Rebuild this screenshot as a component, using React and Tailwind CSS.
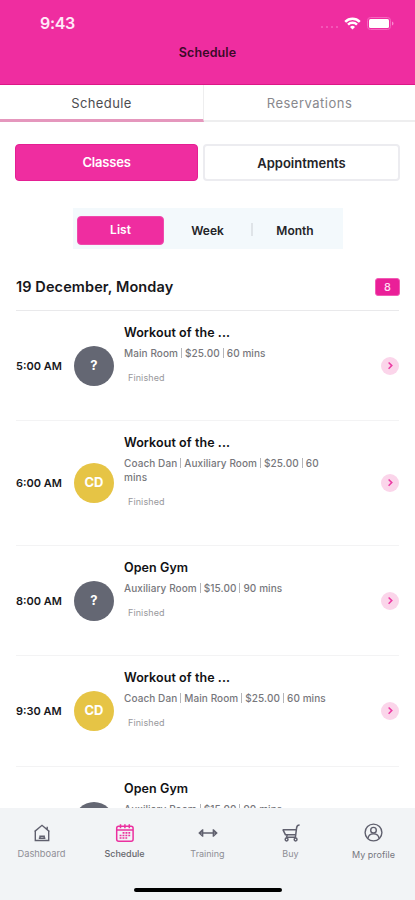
import React from "react";

const classes = [
  { time: "5:00 AM", who: "?", title: "Workout of the ...", info: ["Main Room", "$25.00", "60 mins"], status: "Finished", height: "h-[110px]" },
  { time: "6:00 AM", who: "CD", title: "Workout of the ...", info: ["Coach Dan", "Auxiliary Room", "$25.00", "60 mins"], status: "Finished", height: "h-[125px]" },
  { time: "8:00 AM", who: "?", title: "Open Gym", info: ["Auxiliary Room", "$15.00", "90 mins"], status: "Finished", height: "h-[110px]" },
  { time: "9:30 AM", who: "CD", title: "Workout of the ...", info: ["Coach Dan", "Main Room", "$25.00", "60 mins"], status: "Finished", height: "h-[111px]" },
  { title: "Open Gym", info: ["Auxiliary Room", "$15.00", "90 mins"], height: "h-[110px]" },
];

function StatusBar() {
  return (
    <div className="flex h-[42px] items-end justify-between pr-[21px] pl-[40px]">
      <span className="mb-[8px] text-[16px] leading-[21px] font-semibold tracking-[-0.3px] text-[#ffe9f8]">9:43</span>
      <div className="mb-[12px] flex h-[14px] items-center">
        <div className="mt-[8px] mr-[6px] flex gap-[3px]">
          {[0, 1, 2, 3].map((i) => (
            <i key={i} className="size-[2px] rounded-full bg-[#f565bf]" />
          ))}
        </div>
        <svg width="17" height="13" viewBox="0 0 17 13" fill="none" stroke="#fff" strokeWidth="2.5">
          <path d="M1.2 4.8a10.4 10.4 0 0 1 14.6 0" />
          <path d="M4 7.7a6.4 6.4 0 0 1 9 0" />
          <path d="M8.5 12.6 6 9.9a3.6 3.6 0 0 1 5 0z" fill="#fff" stroke="none" />
        </svg>
        <svg className="ml-[6px]" width="27" height="13" viewBox="0 0 27 13">
          <rect x="0.5" y="0.5" width="23" height="12" rx="3" fill="none" stroke="#f565bf" />
          <rect x="2" y="2" width="20" height="9" rx="1.5" fill="#fff" />
          <path d="M25 4.5c2 .8 2 3.2 0 4z" fill="#f88bd0" />
        </svg>
      </div>
    </div>
  );
}

function ClassRow({ item }) {
  return (
    <div className={`flex shrink-0 items-center border-b border-[#f3f3f4] ${item.height}`}>
      <div className="w-[58px] shrink-0 text-[11px] leading-[16px] font-semibold whitespace-nowrap text-[#17171b]">{item.time}</div>
      <div
        className={`flex size-[40px] shrink-0 items-center justify-center rounded-full text-[13px] font-bold text-white ${
          item.who === "CD" ? "bg-[#e6c445]" : "bg-[#646773]"
        }`}
      >
        {item.who}
      </div>
      <div className="ml-[10px] w-[206px] self-start pt-[13px]">
        <div className="text-[12.5px] leading-[18px] font-semibold tracking-[0.07px] text-[#111114]">{item.title}</div>
        <div className="mt-[4px] text-[10px] leading-[14px] font-medium tracking-[0.08px] text-[#77777c]">
          {item.info.map((part, i) => (
            <React.Fragment key={part}>
              {i > 0 && <span className="mx-[3px] inline-block h-[10px] w-px bg-[#b5b5b9] align-[-1px]" />}
              {part}
            </React.Fragment>
          ))}
        </div>
        {item.status && <div className="mt-[11px] ml-[4px] text-[9px] leading-[14px] tracking-[0.1px] text-[#98989c]">{item.status}</div>}
      </div>
      <div className="ml-auto flex size-[18px] items-center justify-center rounded-full bg-[#fbd5ea]">
        <svg width="18" height="18" viewBox="0 0 18 18" fill="none" stroke="#eb3aa2" strokeWidth="1.5">
          <path d="m7.6 5.5 3.2 3.1-3.2 3.1" />
        </svg>
      </div>
    </div>
  );
}

function HomeIcon() {
  return (
    <svg width="18" height="18" viewBox="0 0 18 18" fill="none" stroke="#60606e" strokeWidth="1.4">
      <path d="M1.5 7.6 9 1.3l7.5 6.3M2.3 7.2v9.3h13.4V7.2M14.2 5.2V2.8" />
      <path d="M7 13.4v-1.2h4.2v1.2M5.8 14.3h6.6" />
    </svg>
  );
}

function CalendarIcon() {
  return (
    <svg width="20" height="18" viewBox="0 0 20 18" fill="none" stroke="#eb309f" strokeWidth="1.5">
      <rect x="1.7" y="2.2" width="16.4" height="15" rx="2" />
      <path d="M2 6h16M5.5 0.3v4M9.9 0.3v4M14.3 0.3v4" />
      <path d="M7.6 8.9h7.6M4.6 11.5h10.6M4.6 14h7.6" strokeWidth="1.7" strokeDasharray="1.9 1" />
    </svg>
  );
}

function TrainingIcon() {
  return (
    <svg width="20" height="18" viewBox="0 0 20 18" fill="none" stroke="#60606e" strokeWidth="1.3">
      <path d="M1 9h18M4.7 5.3v7.4M15.3 5.3v7.4M4.7 5.8 1.2 9l3.5 3.2M15.3 5.8 18.8 9l-3.5 3.2" />
    </svg>
  );
}

function CartIcon() {
  return (
    <svg width="18" height="18" viewBox="0 0 18 18" fill="none" stroke="#60606e" strokeWidth="1.5">
      <path d="M17.6 1c-2.2 0-2.8 1.2-3 2.8l-1.2 9.5H4.3M.6 5.7h13.4M.9 5.7l2.5 5h10" />
      <path d="m5.2 11-.8 2.6" />
      <circle cx="4.6" cy="15.5" r="1.4" />
      <circle cx="13.6" cy="15.5" r="1.4" />
    </svg>
  );
}

function ProfileIcon() {
  return (
    <svg width="19" height="19" viewBox="0 0 19 19" fill="none" stroke="#60606e" strokeWidth="1.4">
      <circle cx="9.5" cy="9.5" r="8.4" />
      <circle cx="9.5" cy="7.2" r="2.8" />
      <path d="M4 15.5c.3-3.2 2-4.6 5.5-4.6s5.2 1.4 5.5 4.6" />
    </svg>
  );
}

const nav = [
  { label: "Dashboard", Icon: HomeIcon, text: "text-[9.3px] text-[#8e8e95]" },
  { label: "Schedule", Icon: CalendarIcon, text: "text-[9px] font-medium text-[#66666d]" },
  { label: "Training", Icon: TrainingIcon, text: "text-[9px] text-[#8e8e95]" },
  { label: "Buy", Icon: CartIcon, text: "text-[9px] text-[#8e8e95]" },
  { label: "My profile", Icon: ProfileIcon, text: "text-[9px] text-[#77777e] pt-[1px]" },
];

export default function App() {
  return (
    <div className="flex h-[900px] w-[415px] flex-col overflow-hidden bg-white font-['Inter','Liberation_Sans',sans-serif]">
      <header className="h-[85px] shrink-0 border-b border-[#dc1787] bg-[#ef2da0]">
        <StatusBar />
        <h1 className="text-center text-[12.5px] leading-[21px] font-semibold tracking-[0.1px] text-[#3b0a29]">Schedule</h1>
      </header>

      <div className="flex h-[37px] shrink-0 text-center text-[13px] leading-[36px]">
        <div className="w-[204px] border-r border-b-[3px] border-r-[#eeeeef] border-b-[#e597bd] tracking-[0.4px] text-[#4c4c50]">Schedule</div>
        <div className="flex-1 border-b-2 border-[#eeeeef] tracking-[0.5px] text-[#88888d]">Reservations</div>
      </div>

      <div className="mt-[22px] flex h-[37px] shrink-0 gap-[5px] px-[15px] text-center text-[13px] font-semibold">
        <div className="w-[183px] rounded-[4px] border border-[#e41f93] bg-[#ef2da0] leading-[34px] text-white tracking-[-0.2px]">Classes</div>
        <div className="flex-1 rounded-[4px] border-2 border-[#ececf0] leading-[35px] text-[#242428]">Appointments</div>
      </div>

      <div className="mt-[27px] ml-[73px] flex h-[41px] w-[270px] shrink-0 items-center bg-[#f3f9fc] pl-[4px] text-center text-[12px] font-semibold text-[#242428]">
        <div className="mt-[4px] h-[29px] w-[87px] rounded-[4px] border border-[#f04aad] bg-[#ef2da0] leading-[26px] text-white">List</div>
        <div className="mt-[4px] w-[87px] leading-[28px]">Week</div>
        <div className="mt-[2px] h-[13px] w-[2px] bg-[#dfe4e8]" />
        <div className="mt-[4px] w-[84px] leading-[28px]">Month</div>
      </div>

      <section className="flex min-h-0 flex-1 flex-col overflow-hidden px-[16px] pt-[15px]">
        <div className="flex h-[47px] shrink-0 items-center justify-between border-b border-[#e9e9eb]">
          <h2 className="text-[14.5px] font-semibold tracking-[0.1px] text-[#17171b]">19 December, Monday</h2>
          <span className="mr-[-1px] h-[18px] w-[25px] rounded-[3px] border border-[#f15bb4] bg-[#ea1f98] text-center text-[11px] leading-[16px] font-medium text-[#ffdff2]">8</span>
        </div>
        {classes.map((item, i) => (
          <ClassRow key={i} item={item} />
        ))}
      </section>

      <nav className="flex h-[92px] shrink-0 flex-col bg-[#f2f4f6]">
        <div className="grid grid-cols-5 pt-[15px]">
          {nav.map(({ label, Icon, text }) => (
            <div key={label} className="flex flex-col items-center">
              <div className="flex h-[19px] items-center"><Icon /></div>
              <span className={`mt-[6px] leading-[12px] whitespace-nowrap ${text}`}>{label}</span>
            </div>
          ))}
        </div>
        <div className="mt-auto mb-[8px] h-[4px] w-[148px] self-center rounded-full bg-black" />
      </nav>
    </div>
  );
}
